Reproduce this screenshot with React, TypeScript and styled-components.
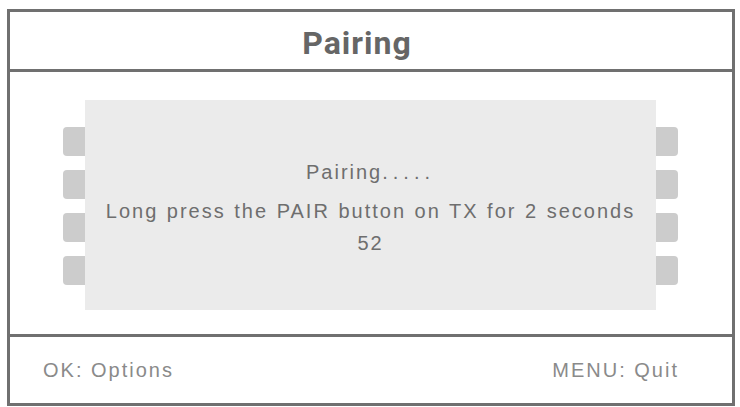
import React from 'react'
import styled, { createGlobalStyle } from 'styled-components'

const Global = createGlobalStyle`
	html, body {
		margin: 0;
		padding: 0;
		background: #ffffff;
	}
	body {
		font-family: "Liberation Sans", Arial, sans-serif;
	}
`

const Page = styled.div`
	width: 740px;
	height: 407px;
	padding: 9px 0 0 7px;
	box-sizing: border-box;
	overflow: hidden;
`

const Frame = styled.div`
	width: 728px;
	height: 397px;
	box-sizing: border-box;
	border: 3px solid #707070;
	display: flex;
	flex-direction: column;
`

const Header = styled.header`
	height: 60px;
	flex: none;
	border-bottom: 3px solid #707070;
	display: flex;
	align-items: center;
	justify-content: center;
	font-family: Roboto, "Liberation Sans", sans-serif;
	font-weight: 700;
	font-size: 32px;
	letter-spacing: 1px;
	color: #666666;
	padding: 4px 28px 0 0;
	box-sizing: border-box;
`

const Main = styled.main`
	height: 262px;
	flex: none;
	display: flex;
	padding: 28px 0 24px 53px;
	box-sizing: border-box;
`

const TabColumn = styled.div`
	display: flex;
	flex-direction: column;
	gap: 14px;
	padding-top: 27px;
`

const Tab = styled.div<{ side: 'left' | 'right' }>`
	width: 22px;
	height: 29px;
	background: #cccccc;
	border-radius: ${p => (p.side === 'left' ? '4px 0 0 4px' : '0 4px 4px 0')};
`

const Panel = styled.div`
	width: 571px;
	background: #ebebeb;
	display: flex;
	flex-direction: column;
	align-items: center;
	padding-top: 61px;
	box-sizing: border-box;
	color: #6e6e6e;
	font-size: 20px;
	letter-spacing: 2px;
	word-spacing: 1px;
`

const Line = styled.div<{ gap: number }>`
	margin-top: ${p => p.gap}px;
	line-height: 22px;
`

const Dots = styled.span`
	letter-spacing: 5px;
`

const Footer = styled.footer`
	flex: 1;
	border-top: 3px solid #707070;
	display: flex;
	align-items: center;
	justify-content: space-between;
	padding: 0 53px 0 33px;
	font-size: 20px;
	letter-spacing: 2px;
	word-spacing: 0;
	color: #8a8a8a;
	box-sizing: border-box;
`

const tabs = [0, 1, 2, 3]

export default function App() {
	return (
		<>
			<Global />
			<Page>
				<Frame>
					<Header>Pairing</Header>
					<Main>
						<TabColumn>
							{tabs.map(i => <Tab key={i} side="left" />)}
						</TabColumn>
						<Panel>
							<Line gap={0}>Pairing<Dots>.....</Dots></Line>
							<Line gap={17}>Long press the PAIR button on TX for 2 seconds</Line>
							<Line gap={10}>52</Line>
						</Panel>
						<TabColumn>
							{tabs.map(i => <Tab key={i} side="right" />)}
						</TabColumn>
					</Main>
					<Footer>
						<span>OK: Options</span>
						<span>MENU: Quit</span>
					</Footer>
				</Frame>
			</Page>
		</>
	)
}
